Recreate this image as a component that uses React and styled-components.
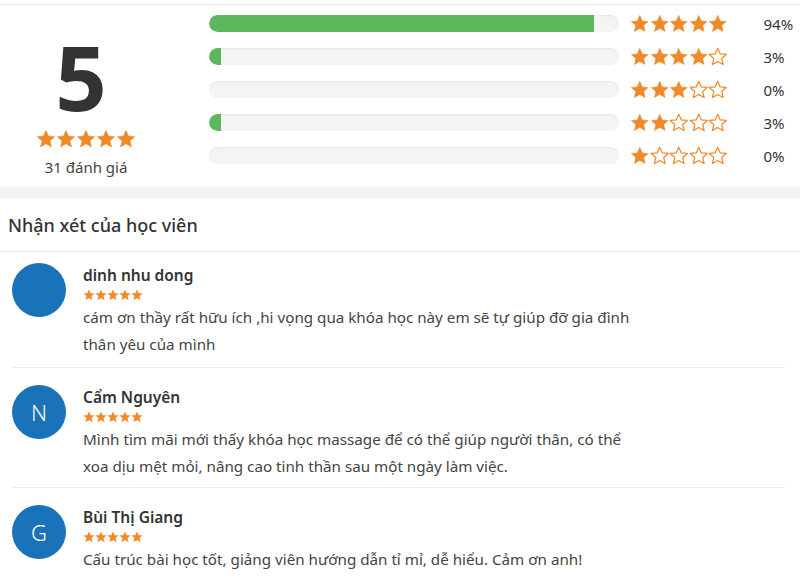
import styled, { createGlobalStyle } from 'styled-components';

const GlobalStyle = createGlobalStyle`
	body {
		margin: 0;
		background: #fff;
		font-family: 'Noto Sans', 'Open Sans', sans-serif;
		color: #333;
	}
`;

const Page = styled.div`
	width: 800px;
	padding-top: 4px;
`;

const Summary = styled.section`
	display: flex;
	border-top: 1px solid #e6e6e6;
	height: 183px;
	box-sizing: border-box;
`;

const Score = styled.div`
	width: 172px;
	display: flex;
	flex-direction: column;
	align-items: center;
	padding-top: 26px;
`;

const BigNumber = styled.div`
	font-size: 90px;
	font-weight: 700;
	line-height: 1;
	color: #333;
	margin-left: -10px;
	margin-bottom: 8px;
`;

const Total = styled.div`
	font-size: 15px;
	color: #444;
	margin-top: 8px;
`;

const Rows = styled.div`
	display: flex;
	flex-direction: column;
	padding: 2px 0 0 37px;
`;

const Row = styled.div`
	display: flex;
	align-items: center;
	height: 33px;
`;

const Track = styled.div`
	width: 410px;
	height: 17px;
	border-radius: 9px;
	background: #f4f4f4;
	box-shadow: inset 0 1px 2px rgba(0, 0, 0, 0.06);
	overflow: hidden;
	margin-right: 11px;
`;

const Fill = styled.div`
	height: 100%;
	background: #5cb85c;
	border-radius: 9px 0 0 9px;
`;

const Percent = styled.span`
	font-size: 15px;
	color: #333;
	margin-left: 36px;
`;

const Band = styled.div`
	height: 11px;
	background: #f2f2f2;
`;

const Heading = styled.h2`
	margin: 0;
	font-size: 18px;
	font-weight: 500;
	color: #333;
	padding: 0 8px;
	height: 53px;
	display: flex;
	align-items: center;
	border-bottom: 1px solid #e8e8e8;
`;

const List = styled.div`
	padding: 0 15px 0 12px;
`;

const Review = styled.div`
	display: flex;
	gap: 17px;
	padding-top: 17px;
	height: 120px;
	box-sizing: border-box;
	border-bottom: 1px solid #eeeeee;

	&:first-child {
		padding-top: 11px;
		height: 116px;
	}

	&:last-child {
		border-bottom: none;
	}
`;

const Avatar = styled.div`
	flex-shrink: 0;
	width: 54px;
	height: 54px;
	border-radius: 50%;
	background: #1a73b9;
	color: #fff;
	font-size: 22px;
	font-weight: 300;
	display: grid;
	place-items: center;
`;

const Body = styled.div`
	display: flex;
	flex-direction: column;
	padding-top: 1px;
`;

const Name = styled.div`
	font-size: 15.5px;
	font-weight: 600;
	color: #333;
	line-height: 22px;
	margin-bottom: 3px;
`;

const Comment = styled.p`
	margin: 3px 0 0;
	font-size: 15.2px;
	line-height: 27px;
	color: #444;
	max-width: 560px;
`;

const StarRow = styled.div`
	display: flex;
	gap: ${(p) => p.$gap}px;
`;

const STAR =
	'M12 1.6l3.1 6.9 7.4.7-5.6 5 1.7 7.4L12 17.8l-6.6 3.8 1.7-7.4-5.6-5 7.4-.7z';

function Stars({ count = 5, filled = 5, size = 20, gap = 0 }) {
	return (
		<StarRow $gap={gap}>
			{Array.from({ length: count }).map((_, i) => (
				<svg key={i} width={size} height={size} viewBox="0 0 24 24">
					<path
						d={STAR}
						fill={i < filled ? '#ef8a2a' : 'none'}
						stroke="#ef8a2a"
						strokeWidth={i < filled ? 0.6 : 1.5}
						strokeLinejoin="round"
					/>
				</svg>
			))}
		</StarRow>
	);
}

const breakdown = [
	{ stars: 5, pct: 94 },
	{ stars: 4, pct: 3 },
	{ stars: 3, pct: 0 },
	{ stars: 2, pct: 3 },
	{ stars: 1, pct: 0 },
];

const reviews = [
	{
		name: 'dinh nhu dong',
		initial: '',
		text: 'cám ơn thầy rất hữu ích ,hi vọng qua khóa học này em sẽ tự giúp đỡ gia đình thân yêu của mình',
	},
	{
		name: 'Cẩm Nguyên',
		initial: 'N',
		text: 'Mình tìm mãi mới thấy khóa học massage để có thể giúp người thân, có thể xoa dịu mệt mỏi, nâng cao tinh thần sau một ngày làm việc.',
	},
	{
		name: 'Bùi Thị Giang',
		initial: 'G',
		text: 'Cấu trúc bài học tốt, giảng viên hướng dẫn tỉ mỉ, dễ hiểu. Cảm ơn anh!',
	},
];

export default function App() {
	return (
		<Page>
			<GlobalStyle />
			<Summary>
				<Score>
					<BigNumber>5</BigNumber>
					<Stars size={20} gap={0} />
					<Total>31 đánh giá</Total>
				</Score>
				<Rows>
					{breakdown.map((b) => (
						<Row key={b.stars}>
							<Track>
								<Fill style={{ width: `${b.pct}%` }} />
							</Track>
							<Stars filled={b.stars} size={19.5} />
							<Percent>{b.pct}%</Percent>
						</Row>
					))}
				</Rows>
			</Summary>
			<Band />
			<Heading>Nhận xét của học viên</Heading>
			<List>
				{reviews.map((r) => (
					<Review key={r.name}>
						<Avatar>{r.initial}</Avatar>
						<Body>
							<Name>{r.name}</Name>
							<Stars size={12} />
							<Comment>{r.text}</Comment>
						</Body>
					</Review>
				))}
			</List>
		</Page>
	);
}
